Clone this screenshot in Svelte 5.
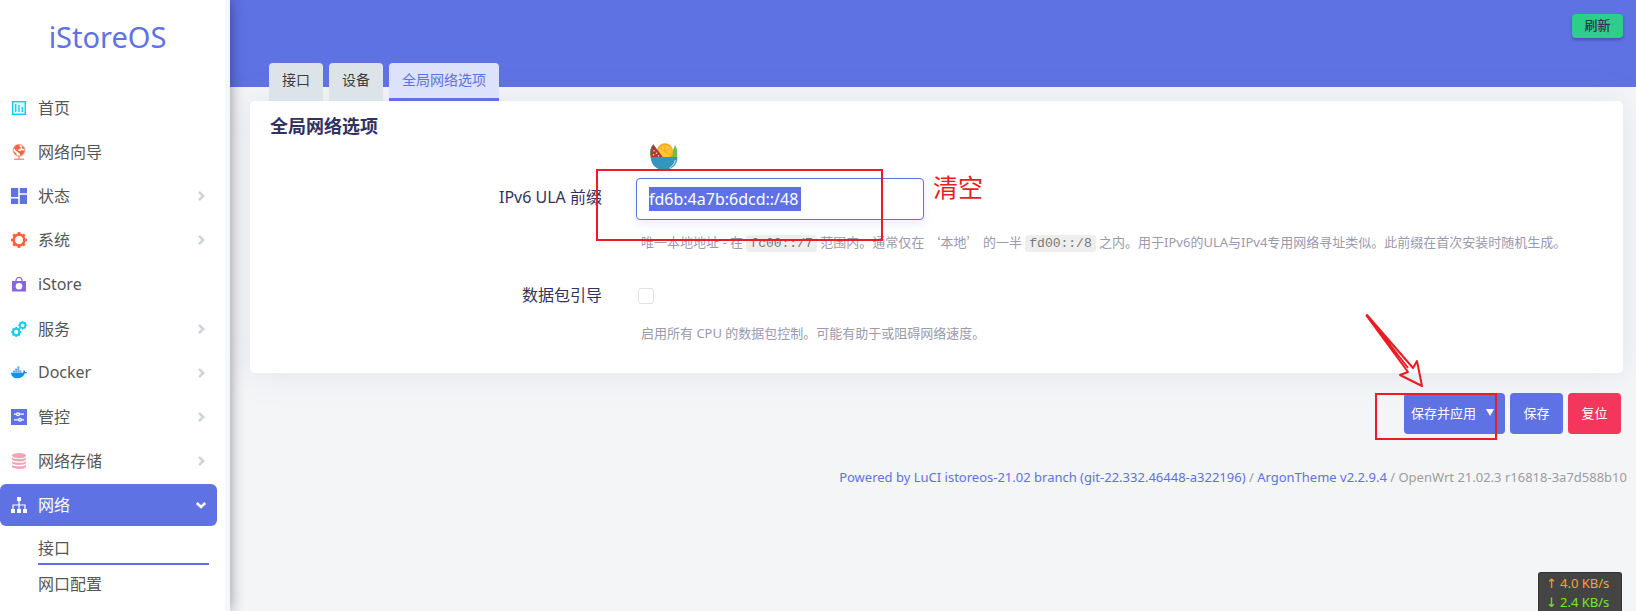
<script>
  const menu = [
    { label: '首页', icon: 'home', color: '#11cdef' },
    { label: '网络向导', icon: 'globe', color: '#fb6340' },
    { label: '状态', icon: 'grid', color: '#5e72e4', sub: true },
    { label: '系统', icon: 'gear', color: '#fb6340', sub: true },
    { label: 'iStore', icon: 'bag', color: '#8965e0', tall: true },
    { label: '服务', icon: 'gears', color: '#11cdef', sub: true },
    { label: 'Docker', icon: 'docker', color: '#0d96e6', sub: true },
    { label: '管控', icon: 'sliders', color: '#5e72e4', sub: true },
    { label: '网络存储', icon: 'disk', color: '#f3a4b5', sub: true },
    { label: '网络', icon: 'tree', color: '#ffffff', sub: true, open: true }
  ];
  const tabs = ['接口', '设备', '全局网络选项'];
  const teeth = [0, 45, 90, 135, 180, 225, 270, 315];
  let ula = $state('fd6b:4a7b:6dcd::/48');
  let steering = $state(false);
</script>

{#snippet cog(cx, cy, r, w)}
  <circle {cx} {cy} {r} fill="none" stroke="currentColor" stroke-width={w} />
  {#each teeth as a}
    <rect x={cx - w / 2} y={cy - r - w} width={w} height={w} fill="currentColor" transform="rotate({a} {cx} {cy})" />
  {/each}
{/snippet}

{#snippet glyph(name)}
  <svg class="icon" viewBox="0 0 16 16" aria-hidden="true">
    {#if name === 'home'}
      <rect x="1.7" y="1.7" width="12.6" height="12.6" fill="#e3f9fd" stroke="currentColor" stroke-width="1.4" />
      <path d="M4.7 4v8M8 5v7M11.300 7v5" stroke="currentColor" stroke-width="1.3" fill="none" />
    {:else if name === 'globe'}
      <circle cx="8" cy="6.300" r="5.800" fill="#fff" stroke="currentColor" stroke-width=".7" />
      <path d="M2.800 3.500 5.500 1l3.500.3-.5 1.800 1.700.4-1.500 1.800-2.200.4 1.400 1.200 2 .5-1 2.400-2.300-1.700-2.300-2zM10.500 1.500l2.300 2 .9 2-2.500-1zM9.800 6.300l3.600.1.200 1.200-2.500 3.700-1.800.2-.7-2.500zM2.600 7l2.800 2.500.3 1.700-2.100-1.300z" fill="currentColor" />
      <path d="M8 12v3M3 15.200h10" stroke="currentColor" stroke-width="1" fill="none" />
    {:else if name === 'grid'}
      <path d="M0 0h7.200v9H0zM8.800 0H16v5.200H8.800zM0 10.600h7.200V16H0zM8.800 6.800H16V16H8.800z" fill="currentColor" />
    {:else if name === 'gear'}
      {@render cog(8, 8, 5.300, 2.700)}
    {:else if name === 'bag'}
      <path d="M1 4h14v10.500H1z" fill="currentColor" />
      <path d="M5 5V3.500a3 3 0 0 1 6 0V5" fill="none" stroke="currentColor" stroke-width="1.2" />
      <circle cx="8" cy="9.300" r="3.300" fill="#fff" />
    {:else if name === 'gears'}
      {@render cog(5.200, 11, 3.100, 1.900)}
      {@render cog(11.600, 4.300, 2.700, 1.600)}
    {:else if name === 'docker'}
      <path d="M2 5.600h1.900v1.800H2zM4.200 5.600h1.900v1.800H4.200zM6.400 5.600h1.900v1.800H6.400zM8.600 5.600h1.900v1.800H8.600zM4.200 3.500h1.900v1.800H4.200zM6.400 3.500h1.900v1.800H6.400zM6.400 1.400h1.900v1.800H6.400z" fill="#4fa5f5" />
      <path d="M0 7.800h11.500c.8-.2 1.100-.8.9-1.700l.5-1c.9.5 1.200 1.200 1.200 1.900.8-.2 1.400 0 1.900.3-.4 1-1.300 1.400-2.500 1.400C12.500 11.500 10 13.300 6.500 13.300 2.600 13.300.2 11.300 0 7.800z" fill="currentColor" />
    {:else if name === 'sliders'}
      <path d="M0 0h16v16H0z" fill="currentColor" />
      <path d="M3 5.200h2.500M8.500 5.200H13M3 10.800h4.500M10.500 10.800H13" stroke="#fff" stroke-width="1.300" />
      <circle cx="7" cy="5.200" r="1.400" fill="none" stroke="#fff" stroke-width="1.300" />
      <circle cx="9" cy="10.800" r="1.400" fill="none" stroke="#fff" stroke-width="1.300" />
    {:else if name === 'disk'}
      <ellipse cx="8" cy="2.600" rx="7" ry="2.600" fill="currentColor" />
      <path d="M1 4.500c2 2 12 2 14 0v2c-1 2.600-13 2.600-14 0zM1 8.200c2 2 12 2 14 0v1.900c-1 2.600-13 2.600-14 0zM1 11.800c2 2 12 2 14 0v1.900c-1 2.900-13 2.900-14 0z" fill="currentColor" />
    {:else}
      <path d="M6 0h4v4H6zM0 12h4v4H0zM6 12h4v4H6zM12 12h4v4h-4z" fill="currentColor" />
      <path d="M8 4v8M2 12V8h12v4" fill="none" stroke="currentColor" stroke-width="1.200" />
    {/if}
  </svg>
{/snippet}

<div class="page">
  <aside>
    <a class="brand" href="#top">iStoreOS</a>
    <nav>
      {#each menu as m}
        <a class="item" class:open={m.open} class:tall={m.tall} href="#menu">
          <span class="ico" style:color={m.color}>{@render glyph(m.icon)}</span>
          <span class="name">{m.label}</span>
          {#if m.sub}
            <svg class="chev" viewBox="0 0 12 12" aria-hidden="true">
              <path d={m.open ? 'M1.800 4 6 8l4.200-4' : 'M4 1.800 8.200 6 4 10.200'} fill="none" stroke="currentColor" stroke-width="2.600" />
            </svg>
          {/if}
        </a>
      {/each}
      <div class="submenu">
        <a class="current" href="#interfaces">接口</a>
        <a href="#ports">网口配置</a>
      </div>
    </nav>
  </aside>

  <main>
    <header>
      <button class="refresh">刷新</button>
    </header>
    <div class="content">
      <div class="tabs">
        {#each tabs as t, i}
          <a class="tab" class:active={i === 2} href="#tab">{t}</a>
        {/each}
      </div>
      <section class="card">
        <h3>全局网络选项</h3>
        <div class="row first">
          <label for="ula">IPv6 ULA 前缀</label>
          <div class="field">
            <div class="box">
              <input id="ula" type="text" bind:value={ula} />
              <svg class="bowl" viewBox="0 0 28 27" aria-hidden="true">
                <path d="M20 15 25 2c2.500 4 3 8 1.500 13z" fill="#6cc04a" />
                <circle cx="15" cy="8.500" r="8.300" fill="#f9a825" />
                <circle cx="15" cy="8.500" r="6.600" fill="#ffc733" />
                <path d="M15 8.500V2M15 8.500 9.500 5M15 8.500 20.500 5M15 8.500l6 3.500" stroke="#f9a825" stroke-width="1" />
                <path d="M.8 15C-.2 9 .5 4.500 3.500 1.500L13.500 15z" fill="#a83a3c" />
                <path d="M1 13C.2 8 1 4 3.500 1.500" fill="none" stroke="#4d8b50" stroke-width="1" />
                <path d="M4 7v1.500M6.500 9.500V11M3.500 11v1.500M8.500 12v1.500" stroke="#f0c9b0" stroke-width="1.300" />
                <path d="M.8 14h26.600c0 7.500-5 13-13.300 13S.8 21.500.8 14z" fill="#3296bd" />
                <path d="M25.300 17c-.8 4-3 6.500-5.800 8" fill="none" stroke="#d5eef7" stroke-width="1" />
              </svg>
              <span class="frame"></span>
              <span class="clear-note">清空</span>
            </div>
            <p class="hint">唯一本地地址 - 在 <code>fc00::/7</code> 范围内。通常仅在 <span class="wide">‘本地’</span> 的一半 <code>fd00::/8</code> 之内。用于IPv6的ULA与IPv4专用网络寻址类似。此前缀在首次安装时随机生成。</p>
          </div>
        </div>
        <div class="row second">
          <label for="steer">数据包引导</label>
          <div class="field">
            <input id="steer" type="checkbox" bind:checked={steering} />
            <p class="hint">启用所有 CPU 的数据包控制。可能有助于或阻碍网络速度。</p>
          </div>
        </div>
      </section>
      <div class="actions">
        <button class="apply">保存并应用 <span class="caret"></span></button>
        <button>保存</button>
        <button class="reset">复位</button>
        <span class="apply-frame"></span>
        <svg class="arrow" viewBox="0 0 62 76" aria-hidden="true">
          <path d="M3 3 45 60 37 63 59 74 54 49 50 56 4 3 45 56" fill="none" stroke="#ed1c24" stroke-width="2" stroke-linejoin="round" />
        </svg>
      </div>
      <footer>
        <a href="#luci">Powered by LuCI istoreos-21.02 branch (git-22.332.46448-a322196)</a> / <a href="#theme">ArgonTheme v2.2.9.4</a> / OpenWrt 21.02.3 r16818-3a7d588b10
      </footer>
    </div>
  </main>

  <div class="speed">
    <div class="up"><span>↑</span>4.0 KB/s</div>
    <div class="down"><span>↓</span>2.4 KB/s</div>
  </div>
</div>

<style>
  :global(body) {
    background: #f4f5f7;
    font-family: "Noto Sans", "Noto Sans CJK SC", sans-serif;
    color: #32325d;
    overflow: hidden;
  }
  .page { display: flex; min-height: 100vh; }
  * { box-sizing: border-box; }
  a { text-decoration: none; color: #5e72e4; }
  aside {
    position: relative;
    z-index: 2;
    flex: none;
    width: 230px;
    height: 100vh;
    overflow: hidden;
    background: #fff;
    border-right: 5px solid #f5f8fb;
    box-shadow: 0 0 14px rgba(0, 0, 0, .42);
  }
  .brand {
    display: block;
    height: 87px;
    padding-right: 10px;
    line-height: 74px;
    font-size: 29px;
    text-align: center;
  }
  .item {
    display: flex;
    align-items: center;
    height: 42px;
    margin: 0 8px 2px 0;
    padding: 0 10px 0 11px;
    border-radius: 6px;
    font-size: 16px;
    color: #565656;
  }
  .item.tall { height: 43px; }
  .item.open { background: #5e72e4; color: #fff; }
  .ico { display: flex; width: 27px; }
  .icon { width: 16px; height: 16px; }
  .name { flex: 1; padding-bottom: 2px; }
  .chev { width: 12px; height: 12px; color: #ced4da; }
  .open .chev { color: #fff; }
  .submenu { display: grid; padding: 4px 16px 0 38px; }
  .submenu a { height: 37px; line-height: 34px; font-size: 16px; color: #565656; }
  .submenu .current { height: 33px; margin-bottom: 2px; line-height: 32px; border-bottom: 2px solid #5e72e4; }
  main { flex: 1; min-width: 0; }
  header {
    display: flex;
    justify-content: flex-end;
    height: 87px;
    padding: 14px 13px;
    background: #5e72e4;
  }
  button {
    border: 0;
    border-radius: 4px;
    background: #5e72e4;
    color: #fff;
    font: 13px "Noto Sans", "Noto Sans CJK SC", sans-serif;
  }
  .refresh {
    width: 51px;
    height: 24px;
    padding: 0 0 2px;
    background: #2dce89;
    color: #32325d;
    font-weight: 500;
    line-height: 20px;
    box-shadow: 0 2px 3px rgba(30, 40, 90, .4);
  }
  .content { padding: 0 13px 0 20px; }
  .tabs { display: flex; gap: 6px; margin-top: -24px; padding-left: 19px; }
  .tab {
    height: 38px;
    padding: 0 13px;
    border-radius: 4px 4px 0 0;
    background: #dce3e9;
    color: #3c3c3c;
    font-size: 14px;
    line-height: 34px;
  }
  .tab.active { background: #dce1fc; color: #5e72e4; border-bottom: 3px solid #5e72e4; }
  .card {
    min-height: 272px;
    border-radius: 5px;
    background: #fff;
    box-shadow: 0 0 32px rgba(136, 152, 170, .17);
  }
  h3 { margin: 0; padding: 11px 20px 1px; font-size: 18px; line-height: 28px; font-weight: 700; }
  .row { display: flex; }
  .row label { flex: none; width: 352px; text-align: right; font-size: 16px; line-height: 24px; }
  .first { margin-top: 37px; }
  .second { margin-top: 31px; }
  .first label { padding-top: 7px; }
  .field { flex: 1; min-width: 0; padding-left: 34px; }
  .box { position: relative; width: 288px; }
  #ula {
    display: block;
    width: 100%;
    height: 42px;
    padding: 0 12px;
    border: 1px solid #5e72e4;
    border-radius: 4px;
    outline: 0;
    color: #fff;
    font: 16px "Noto Sans", sans-serif;
    background: #fff linear-gradient(#5e72e4, #5e72e4) 12px 8px / 152px 24px no-repeat;
    box-shadow: 0 4px 10px rgba(94, 114, 228, .12);
  }
  .bowl { position: absolute; left: 14px; top: -35px; width: 28px; height: 27px; }
  .frame { position: absolute; left: -40px; top: -9px; width: 287px; height: 72px; border: 2px solid #ed1c24; }
  .clear-note { position: absolute; left: 297px; top: -8px; white-space: nowrap; font-size: 25px; line-height: 34px; color: #ed1c24; }
  .hint { margin: 12px 0 0; padding-left: 5px; font-size: 13px; line-height: 20px; color: #9a9aae; white-space: nowrap; }
  .wide { font-family: "Noto Sans CJK SC", sans-serif; }
  code { padding: 1px 4px; border-radius: 3px; background: #eee; color: #777; font: 13px "Liberation Mono", monospace; }
  #steer {
    display: block;
    appearance: none;
    width: 16px;
    height: 16px;
    margin: 5px 0 0 2px;
    border: 1px solid #dee2e6;
    border-radius: 3px;
    background: #fff;
  }
  .second .hint { margin-top: 19px; }
  .actions { position: relative; display: flex; justify-content: flex-end; gap: 5px; padding: 20px 2px 0 0; }
  .actions button { width: 53px; height: 41px; padding: 0 0 2px; }
  .actions .apply { display: flex; align-items: center; justify-content: space-between; width: 101px; padding: 0 11px 2px 7px; }
  .caret { border: 4px solid transparent; border-top: 7px solid #fff; border-bottom: 0; }
  .actions .reset { background: #f5365c; }
  .apply-frame { position: absolute; right: 126px; top: 20px; width: 122px; height: 47px; border: 2px solid #ed1c24; }
  .arrow { position: absolute; right: 198px; top: -61px; width: 62px; height: 76px; }
  footer { margin: 31px -4px 0 0; text-align: right; font-size: 13px; line-height: 24px; color: #9c9c9c; }
  .speed {
    position: fixed;
    z-index: 3;
    right: 14px;
    bottom: 0;
    width: 84px;
    height: 39px;
    padding: 1px 7px;
    border: 1px solid #333;
    border-bottom: 0;
    border-radius: 3px 3px 0 0;
    background: #444;
    font: 12px "Noto Sans", sans-serif;
    font-size: 13px;
    line-height: 19px;
    white-space: nowrap;
  }
  .speed span { display: inline-block; width: 14px; font-family: "DejaVu Sans", sans-serif; }
  .up { color: #ffa033; }
  .down { color: #7be52d; }
</style>
